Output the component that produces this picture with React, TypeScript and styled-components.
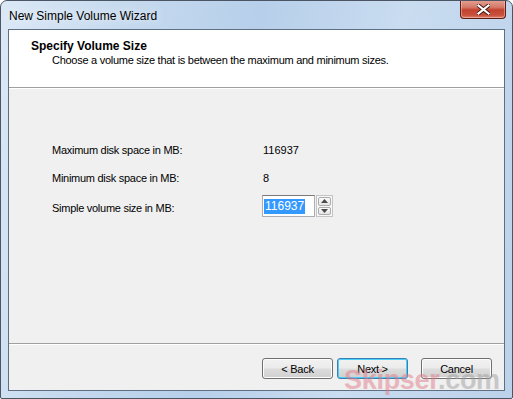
import React from 'react';
import styled, { createGlobalStyle } from 'styled-components';

const GlobalStyle = createGlobalStyle`
  html, body {
    margin: 0;
    padding: 0;
    background: #ffffff;
  }
  body {
    font-family: "Liberation Sans", Arial, sans-serif;
    font-size: 11px;
    color: #000;
  }
`;

const Window = styled.div`
  position: relative;
  width: 513px;
  height: 399px;
  box-sizing: border-box;
  display: flex;
  flex-direction: column;
  padding: 0 7px 7px 7px;
  border: 1px solid #4b5563;
  border-radius: 7px 7px 2px 2px;
  background: linear-gradient(100deg, #dbe8f6 0%, #c7dbef 20%, #b7cfea 45%, #c9dcf0 70%, #bcd2ea 100%);
  overflow: hidden;
`;

const TitleBar = styled.div`
  height: 28px;
  display: flex;
  align-items: flex-start;
  justify-content: space-between;
`;

const Title = styled.div`
  font-size: 12px;
  color: #000;
  padding: 8px 0 0 1px;
  text-shadow: 0 0 8px rgba(255, 255, 255, 0.9);
`;

const CloseButton = styled.div`
  width: 46px;
  height: 19px;
  margin-right: -1px;
  margin-top: -1px;
  box-sizing: border-box;
  border: 1px solid #5d1c14;
  border-top: none;
  border-radius: 0 0 4px 4px;
  background: linear-gradient(#e6a295 0%, #d47a69 40%, #c2432f 55%, #c9523d 85%, #dd8670 100%);
  box-shadow: inset 0 0 0 1px rgba(255, 210, 200, 0.45);
  display: flex;
  align-items: center;
  justify-content: center;
`;

const Client = styled.div`
  flex: 1;
  display: flex;
  flex-direction: column;
  border: 1px solid #5f6f83;
  background: #f0f0f0;
  letter-spacing: -0.27px;
`;

const Header = styled.div`
  height: 58px;
  background: #ffffff;
  border-bottom: 1px solid #a0a0a0;
  box-shadow: 0 1px 0 #ffffff;
  padding: 10px 0 0 22px;
  box-sizing: border-box;
`;

const HeaderTitle = styled.div`
  font-weight: bold;
  font-size: 12px;
  line-height: 13px;
  letter-spacing: 0;
`;

const HeaderSub = styled.div`
  font-size: 11px;
  line-height: 13px;
  padding-left: 21px;
  margin-top: 1px;
`;

const Body = styled.div`
  flex: 1;
  padding: 56px 0 0 43px;
  display: flex;
  flex-direction: column;
`;

const FieldRow = styled.div<{ $gap: number }>`
  display: grid;
  grid-template-columns: 211px auto;
  align-items: center;
  margin-bottom: ${p => p.$gap}px;
  line-height: 13px;
`;

const Value = styled.div`
  font-size: 11px;
  letter-spacing: 0;
`;

const SpinBox = styled.div`
  display: flex;
  align-items: stretch;
  height: 22px;
  margin-top: -5px;
  margin-left: -1px;
`;

const SpinInput = styled.div`
  width: 53px;
  box-sizing: border-box;
  border: 1px solid #abadb3;
  border-top-color: #7a7a7a;
  background: #ffffff;
  padding: 3px 0 0 1px;
  letter-spacing: 0;
`;

const Selected = styled.span`
  background: #3399ff;
  color: #ffffff;
  font-size: 12px;
  line-height: 15px;
  display: inline-block;
  padding: 0 1px;
`;

const SpinButtons = styled.div`
  display: flex;
  flex-direction: column;
  width: 17px;
  margin-left: 1px;
  border: 1px solid #c4c4c4;
  background: #f7f7f7;
  padding: 1px;
  box-sizing: border-box;
  gap: 1px;
`;

const SpinBtn = styled.div`
  flex: 1;
  border: 1px solid #acacac;
  border-radius: 2px;
  background: linear-gradient(#fafafa, #e4e4e4);
  display: flex;
  align-items: center;
  justify-content: center;
`;

const Footer = styled.div`
  height: 47px;
  border-top: 1px solid #a0a0a0;
  box-shadow: inset 0 1px 0 #ffffff;
  box-sizing: border-box;
  display: flex;
  justify-content: flex-end;
  align-items: flex-start;
  padding: 14px 12px 0 0;
`;

const Button = styled.div<{ $isDefault?: boolean; $gapRight: number }>`
  width: 71px;
  height: 21px;
  box-sizing: border-box;
  margin-right: ${p => p.$gapRight}px;
  border: 1px solid ${p => (p.$isDefault ? '#3c7fb1' : '#707070')};
  border-radius: 3px;
  background: linear-gradient(#f2f2f2 0%, #ebebeb 48%, #dddddd 52%, #cfcfcf 100%);
  box-shadow: inset 0 0 0 1px ${p => (p.$isDefault ? '#48d0fb' : '#fcfcfc')};
  display: flex;
  align-items: center;
  justify-content: center;
  font-size: 11px;
`;

const Watermark = styled.div`
  position: absolute;
  left: 343px;
  top: 364px;
  font-family: "Liberation Sans", Arial, sans-serif;
  font-weight: bold;
  font-size: 27px;
  letter-spacing: -0.3px;
  opacity: 0.5;
  pointer-events: none;
  white-space: nowrap;
`;

const WmRed = styled.span`
  color: #e07c88;
`;

const WmGray = styled.span`
  color: #a0a0a0;
`;

const Arrow = ({ up }: { up?: boolean }) => (
  <svg width="7" height="4" viewBox="0 0 7 4">
    <path d={up ? 'M0 4 L3.5 0 L7 4 Z' : 'M0 0 L3.5 4 L7 0 Z'} fill="#4a4a4a" />
  </svg>
);

const CloseGlyph = () => (
  <svg width="13" height="11" viewBox="0 0 13 11">
    <path
      d="M1.5 1.5 L11.5 9.5 M11.5 1.5 L1.5 9.5"
      stroke="#3b1510"
      strokeWidth="4"
      strokeLinecap="square"
    />
    <path
      d="M1.5 1.5 L11.5 9.5 M11.5 1.5 L1.5 9.5"
      stroke="#ffffff"
      strokeWidth="2.2"
      strokeLinecap="square"
    />
  </svg>
);

export default function App() {
  return (
    <>
      <GlobalStyle />
      <Window>
        <TitleBar>
          <Title>New Simple Volume Wizard</Title>
          <CloseButton>
            <CloseGlyph />
          </CloseButton>
        </TitleBar>
        <Client>
          <Header>
            <HeaderTitle>Specify Volume Size</HeaderTitle>
            <HeaderSub>Choose a volume size that is between the maximum and minimum sizes.</HeaderSub>
          </Header>
          <Body>
            <FieldRow $gap={15}>
              <span>Maximum disk space in MB:</span>
              <Value>116937</Value>
            </FieldRow>
            <FieldRow $gap={15}>
              <span>Minimum disk space in MB:</span>
              <Value>8</Value>
            </FieldRow>
            <FieldRow $gap={0}>
              <span>Simple volume size in MB:</span>
              <SpinBox>
                <SpinInput>
                  <Selected>116937</Selected>
                </SpinInput>
                <SpinButtons>
                  <SpinBtn>
                    <Arrow up />
                  </SpinBtn>
                  <SpinBtn>
                    <Arrow />
                  </SpinBtn>
                </SpinButtons>
              </SpinBox>
            </FieldRow>
          </Body>
          <Footer>
            <Button $gapRight={4}>&lt; Back</Button>
            <Button $isDefault $gapRight={13}>Next &gt;</Button>
            <Button $gapRight={0}>Cancel</Button>
          </Footer>
        </Client>
        <Watermark>
          <WmRed>Skipser</WmRed>
          <WmGray>.com</WmGray>
        </Watermark>
      </Window>
    </>
  );
}
